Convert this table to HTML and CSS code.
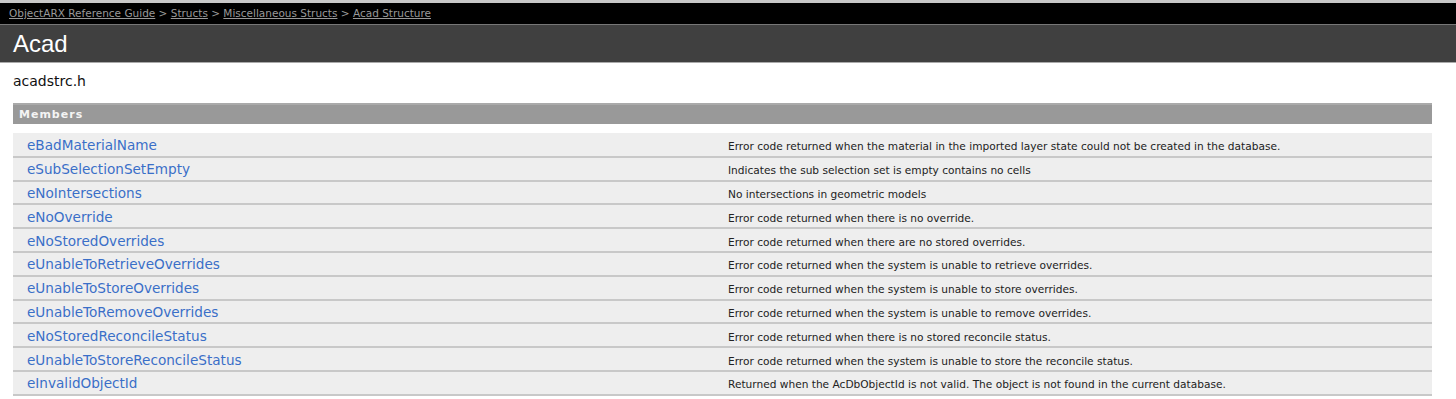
FILE: index.html
```html
<!DOCTYPE html>
<html lang="en">
<head>
    <meta charset="UTF-8">
    <title>Acad Structure</title>
    <link rel="stylesheet" href="styles.css">
</head>
<body>
    <div class="breadcrumb">
        <a href="#">ObjectARX Reference Guide</a> &gt; <a href="#">Structs</a> &gt; <a href="#">Miscellaneous Structs</a> &gt; <a href="#">Acad Structure</a>
    </div>
    <div class="title-bar">
        <h1>Acad</h1>
    </div>
    <div class="content">
        <p class="header-file">acadstrc.h</p>
        <div class="section-head">Members</div>
        <table class="members">
            <tr><td class="name"><a href="#">eBadMaterialName</a></td><td class="desc">Error code returned when the material in the imported layer state could not be created in the database.</td></tr>
            <tr><td class="name"><a href="#">eSubSelectionSetEmpty</a></td><td class="desc">Indicates the sub selection set is empty contains no cells</td></tr>
            <tr><td class="name"><a href="#">eNoIntersections</a></td><td class="desc">No intersections in geometric models</td></tr>
            <tr><td class="name"><a href="#">eNoOverride</a></td><td class="desc">Error code returned when there is no override.</td></tr>
            <tr><td class="name"><a href="#">eNoStoredOverrides</a></td><td class="desc">Error code returned when there are no stored overrides.</td></tr>
            <tr><td class="name"><a href="#">eUnableToRetrieveOverrides</a></td><td class="desc">Error code returned when the system is unable to retrieve overrides.</td></tr>
            <tr><td class="name"><a href="#">eUnableToStoreOverrides</a></td><td class="desc">Error code returned when the system is unable to store overrides.</td></tr>
            <tr><td class="name"><a href="#">eUnableToRemoveOverrides</a></td><td class="desc">Error code returned when the system is unable to remove overrides.</td></tr>
            <tr><td class="name"><a href="#">eNoStoredReconcileStatus</a></td><td class="desc">Error code returned when there is no stored reconcile status.</td></tr>
            <tr><td class="name"><a href="#">eUnableToStoreReconcileStatus</a></td><td class="desc">Error code returned when the system is unable to store the reconcile status.</td></tr>
            <tr><td class="name"><a href="#">eInvalidObjectId</a></td><td class="desc">Returned when the AcDbObjectId is not valid. The object is not found in the current database.</td></tr>
        </table>
    </div>
</body>
</html>
```

FILE: styles.css
```css
* {
    margin: 0;
    padding: 0;
    box-sizing: border-box;
}

body {
    font-family: "DejaVu Sans", Verdana, sans-serif;
    background-color: white;
    color: #222;
    border-top: 3px solid #c8c8c8;
}

.breadcrumb {
    background-color: black;
    color: #999;
    font-size: 10.5px;
    height: 21px;
    line-height: 21px;
    padding-left: 9px;
}

.breadcrumb a {
    color: #999;
}

.title-bar {
    background-color: #404040;
    border-top: 1px solid #777;
    border-bottom: 1px solid #aaa;
    height: 39px;
    padding-left: 13px;
}

.title-bar h1 {
    font-family: "Liberation Sans", Arial, sans-serif;
    font-weight: normal;
    font-size: 24px;
    color: white;
    line-height: 38px;
}

.content {
    padding: 0 24px 0 13px;
}

.header-file {
    font-size: 14px;
    margin-top: 9px;
    line-height: 18px;
    color: #111;
}

.section-head {
    margin-top: 13px;
    background-color: #999;
    border-top: 2px solid #aaa;
    height: 21px;
    line-height: 19px;
    padding-left: 6px;
    font-size: 11px;
    font-weight: bold;
    letter-spacing: 1px;
    color: #f4f4f4;
}

.members {
    margin-top: 9px;
    width: 100%;
    border-collapse: collapse;
}

.members td {
    background-color: #eeeeee;
    border-bottom: 2px solid #c8c8c8;
    height: 23.8px;
    vertical-align: middle;
    padding-top: 1px;
}

.members .name {
    width: 715px;
    padding-left: 14px;
    font-size: 13.6px;
}

.members .name a {
    color: #3a6fc8;
    text-decoration: none;
}

.members .desc {
    font-size: 10.6px;
    color: #222;
    padding-top: 3px;
}
```
